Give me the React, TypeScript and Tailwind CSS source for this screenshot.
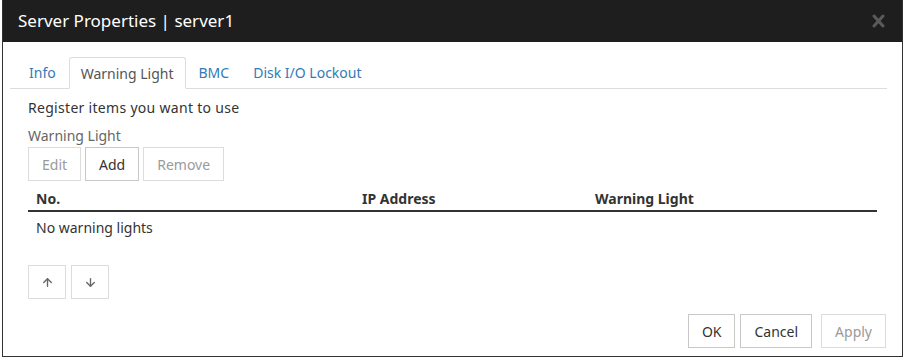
import { ArrowUp, ArrowDown } from 'lucide-react';

const tabs = ['Info', 'Warning Light', 'BMC', 'Disk I/O Lockout'];

function Btn({ label, disabled, className = '' }: { label: string; disabled?: boolean; className?: string }) {
  return (
    <button
      className={`h-[34px] px-[13px] border bg-white text-[14px] ${
        disabled ? 'border-[#dcdcdc] text-[#9a9a9a]' : 'border-[#c8c8c8] text-[#333]'
      } ${className}`}
    >
      {label}
    </button>
  );
}

export default function App() {
  return (
    <div className="w-[904px] h-[360px] bg-white" style={{ fontFamily: '"Noto Sans", "Liberation Sans", sans-serif' }}>
      <div className="ml-[2px] w-[901px] h-[357px] border border-[#333] border-t-0 flex flex-col">
        {/* title bar */}
        <div className="h-[42px] bg-[#1e1e1e] flex items-center justify-between pl-[15px] pr-[17px]">
          <span className="text-white text-[17px]">Server Properties | server1</span>
          <svg width="13" height="14" viewBox="0 0 13 14">
            <path d="M2 2 L11 12 M11 2 L2 12" stroke="#5a5a5a" strokeWidth="3" strokeLinecap="round" />
          </svg>
        </div>

        <div className="pl-[7px] pr-[15px] pt-[15px] flex-1 flex flex-col">
          {/* tabs */}
          <div className="flex border-b border-[#ddd] pl-[8px] h-[32px]">
            {tabs.map(tab =>
              tab === 'Warning Light' ? (
                <div
                  key={tab}
                  className="px-[11px] mr-[2px] h-[32px] -mb-px bg-white border border-[#ddd] border-b-white rounded-t-[3px] flex items-center text-[14px] text-[#555]"
                >
                  {tab}
                </div>
              ) : (
                <div key={tab} className="px-[11px] mr-[2px] flex items-center text-[14px] text-[#337ab7]">
                  {tab}
                </div>
              )
            )}
          </div>

          {/* pane */}
          <div className="pl-[18px] pr-[10px]">
            <div className="mt-[10px] text-[14px] tracking-[0.3px] text-[#333] h-[18px] leading-[18px]">Register items you want to use</div>
            <div className="mt-[10px] text-[14px] text-[#666] h-[18px] leading-[18px]">Warning Light</div>
            <div className="mt-[2px] flex gap-[4px]">
              <Btn label="Edit" disabled />
              <Btn label="Add" />
              <Btn label="Remove" disabled />
            </div>

            <div className="mt-[6px] flex h-[25px] items-center border-b-2 border-[#333] text-[14px] font-bold text-[#333]">
              <div className="w-[326px] pl-[8px]">No.</div>
              <div className="w-[233px] pl-[8px]">IP Address</div>
              <div className="pl-[8px]">Warning Light</div>
            </div>
            <div className="h-[30px] flex items-center pl-[8px] text-[14px] text-[#333]">No warning lights</div>

            <div className="mt-[23px] flex gap-[5px]">
              <button className="w-[38px] h-[34px] border border-[#dcdcdc] flex items-center justify-center text-[#666]">
                <ArrowUp size={13} strokeWidth={2.5} />
              </button>
              <button className="w-[38px] h-[34px] border border-[#dcdcdc] flex items-center justify-center text-[#666]">
                <ArrowDown size={13} strokeWidth={2.5} />
              </button>
            </div>
          </div>

          <div className="mt-[15px] flex justify-end pr-[1px]">
            <Btn label="OK" />
            <Btn label="Cancel" className="ml-[5px] mr-[9px]" />
            <Btn label="Apply" disabled />
          </div>
        </div>
      </div>
    </div>
  );
}
